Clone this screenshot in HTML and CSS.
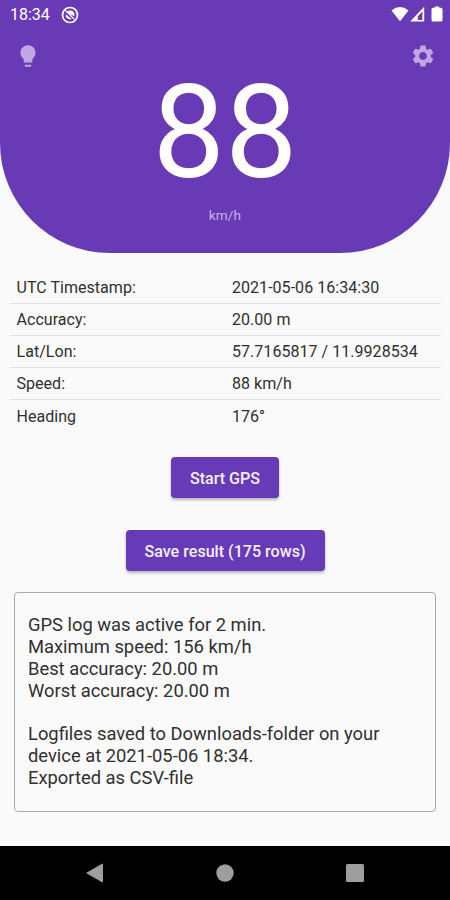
FILE: index.html
```html
<!DOCTYPE html>
<html lang="en">
<head>
  <meta charset="UTF-8">
  <meta name="viewport" content="width=device-width, initial-scale=1.0">
  <title>GPS Logger</title>
  <link rel="stylesheet" href="styles.css">
</head>
<body>

<header class="header">
  <div class="status-bar">
    <span class="clock">18:34</span>
    <svg class="sync-icon" width="18" height="18" viewBox="0 0 18 18">
      <circle cx="9" cy="9" r="7.500" fill="none" stroke="#fff" stroke-width="1.700"/>
      <path d="M5 6.300L8 4.600a4.400 4.400 0 0 1 5.300 5.600z" fill="#fff"/>
      <path d="M4.700 8.200a4.400 4.400 0 0 0 6 4.800z" fill="#fff"/>
      <path d="M4.400 4.400l9 9" stroke="#fff" stroke-width="1.300"/>
    </svg>
    <svg class="signal-icons" width="54" height="18" viewBox="0 0 54 18">
      <path d="M.5 4.400Q9 -2.400 17.500 4.400L9 15.300z" fill="#fff"/>
      <path d="M19.200 15.600L33.200.8v14.800zM26.800 10.300v3.700h4.600V5.400z" fill="#fff" fill-rule="evenodd"/>
      <path d="M43.800 1.700V.5h4.400v1.200h1.700q1.600 0 1.600 1.600v10.600q0 1.600-1.600 1.600h-7.800q-1.600 0-1.600-1.600V3.300q0-1.600 1.600-1.600z" fill="#fff"/>
    </svg>
  </div>
  <div class="toolbar">
    <svg width="26" height="26" viewBox="0 0 24 24">
      <path d="M9 21c0 .55.45 1 1 1h4c.55 0 1-.45 1-1v-1H9v1zm3-19C8.140 2 5 5.140 5 9c0 2.380 1.190 4.470 3 5.740V17c0 .55.45 1 1 1h6c.55 0 1-.45 1-1v-2.260c1.810-1.270 3-3.360 3-5.740 0-3.860-3.140-7-7-7z"/>
    </svg>
    <svg width="26" height="26" viewBox="0 0 24 24">
      <path d="M19.140 12.940c.04-.3.06-.61.06-.94 0-.32-.02-.64-.07-.94l2.030-1.580c.18-.14.23-.41.12-.61l-1.920-3.320c-.12-.22-.37-.29-.59-.22l-2.390.96c-.5-.38-1.030-.7-1.620-.94l-.36-2.540c-.04-.24-.24-.41-.48-.41h-3.840c-.24 0-.43.17-.47.41l-.36 2.540c-.59.24-1.130.57-1.620.94l-2.390-.96c-.22-.08-.47 0-.59.22L2.740 8.870c-.12.21-.08.47.12.61l2.030 1.580c-.05.3-.09.63-.09.94s.02.64.07.94l-2.030 1.580c-.18.14-.23.41-.12.61l1.920 3.320c.12.22.37.29.59.22l2.390-.96c.5.38 1.030.7 1.620.94l.36 2.540c.05.24.24.41.48.41h3.840c.24 0 .44-.17.47-.41l.36-2.540c.59-.24 1.130-.56 1.620-.94l2.390.96c.22.08.47 0 .59-.22l1.920-3.320c.12-.22.07-.47-.12-.61l-2.010-1.580zM12 15.600c-1.980 0-3.600-1.620-3.600-3.600s1.620-3.600 3.600-3.600 3.600 1.620 3.600 3.600-1.620 3.600-3.600 3.600z"/>
    </svg>
  </div>
  <div class="speed">88</div>
  <div class="unit">km/h</div>
</header>

<main class="content">
  <div class="info">
    <div class="row"><span>UTC Timestamp:</span><span>2021-05-06 16:34:30</span></div>
    <div class="row"><span>Accuracy:</span><span>20.00 m</span></div>
    <div class="row"><span>Lat/Lon:</span><span>57.7165817 / 11.9928534</span></div>
    <div class="row"><span>Speed:</span><span>88 km/h</span></div>
    <div class="row"><span>Heading</span><span>176°</span></div>
  </div>

  <button class="button start">Start GPS</button>
  <button class="button save">Save result (175 rows)</button>

  <div class="log">
    GPS log was active for 2 min.<br>
    Maximum speed: 156 km/h<br>
    Best accuracy: 20.00 m<br>
    Worst accuracy: 20.00 m<br>
    <br>
    Logfiles saved to Downloads-folder on your<br>
    device at 2021-05-06 18:34.<br>
    Exported as CSV-file
  </div>
</main>

<nav class="nav-bar">
  <svg width="18" height="20" viewBox="0 0 18 20"><path d="M.8 10L16.500 1v18z" fill="#9e9e9e" stroke="#9e9e9e" stroke-linejoin="round"/></svg>
  <svg width="18" height="20" viewBox="0 0 18 20"><circle cx="9" cy="10" r="8.700" fill="#9e9e9e"/></svg>
  <svg width="18" height="20" viewBox="0 0 18 20"><rect y="1" width="18" height="18" rx="1.500" fill="#9e9e9e"/></svg>
</nav>

</body>
</html>
```

FILE: styles.css
```css
* {
  box-sizing: border-box;
}

body {
  margin: 0;
  height: 900px;
  display: flex;
  flex-direction: column;
  overflow: hidden;
  background-color: #fafafa;
  color: #303030;
  font-family: Roboto, "Liberation Sans", sans-serif;
}

.header {
  height: 252.5px;
  flex: none;
  background-color: #693ab6;
  border-radius: 0 0 110px 110px;
  color: white;
}

.status-bar {
  height: 29px;
  display: flex;
  align-items: center;
  padding: 0 5px 0 10px;
}

.clock {
  font-size: 16px;
}

.sync-icon {
  margin-left: 11px;
}

.signal-icons {
  margin-left: auto;
}

.toolbar {
  height: 53px;
  display: flex;
  justify-content: space-between;
  align-items: center;
  padding: 0 14px 0 15px;
}

.toolbar svg {
  fill: #c0a7e2;
}

.speed {
  height: 100px;
  padding-top: 1px;
  line-height: 100px;
  font-size: 129px;
  text-align: center;
}

.unit {
  margin-top: 24px;
  font-size: 13.6px;
  line-height: 18px;
  letter-spacing: 0.1px;
  text-align: center;
  color: #c6b2e6;
}

.content {
  flex: 1;
  display: flex;
  flex-direction: column;
  align-items: center;
}

.info {
  width: 431px;
  margin-top: 19px;
}

.row {
  height: 32.1px;
  display: flex;
  align-items: center;
  padding-top: 1px;
  padding-left: 7px;
  border-bottom: 1px solid #e0e0e0;
  font-size: 16px;
  letter-spacing: 0.04px;
}

.row:last-child {
  border-bottom: none;
}

.row span {
  flex: none;
  width: 215.5px;
  white-space: nowrap;
}

.button {
  height: 41px;
  padding-top: 2px;
  border: none;
  border-radius: 4px;
  background-color: #673ab7;
  color: #f6f0ff;
  font-family: inherit;
  font-size: 16.1px;
  font-weight: 500;
  box-shadow: 0 2px 3px rgba(0, 0, 0, 0.28);
}

.start {
  width: 108px;
  margin-top: 25.5px;
}

.save {
  width: 199px;
  margin-top: 32px;
}

.log {
  width: 422px;
  height: 220px;
  margin-top: 21px;
  padding: 21px 13px;
  border: 1px solid #aaa;
  border-radius: 4px;
  font-size: 18.35px;
  line-height: 21.75px;
  white-space: nowrap;
}

.nav-bar {
  height: 54.5px;
  flex: none;
  display: flex;
  justify-content: space-between;
  align-items: center;
  padding: 0 86px;
  background-color: black;
}
```
